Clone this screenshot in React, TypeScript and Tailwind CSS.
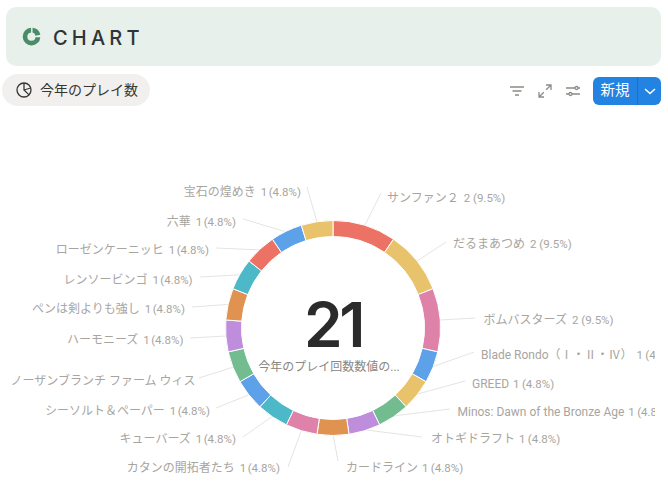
import React from "react";

const CX = 333;
const CY = 328;
const RO = 107.5;
const RI = 91.5;
const FONT = "Roboto, 'Noto Sans CJK JP', sans-serif";
const INTER = "Inter, 'Noto Sans CJK JP', sans-serif";

type L = {
  color: string;
  units: number;
  name: string;
  val: string;
  end: [number, number];
  tx: number;
  ty: number;
  anchor: "start" | "end";
};

const items: L[] = [
  { color: "#EC7266", units: 2, name: "サンファン２", val: "2 (9.5%)", end: [381, 193], tx: 387, ty: 202, anchor: "start" },
  { color: "#E9C26C", units: 2, name: "だるまあつめ", val: "2 (9.5%)", end: [446, 242], tx: 453, ty: 248, anchor: "start" },
  { color: "#DF82A9", units: 2, name: "ボムバスターズ", val: "2 (9.5%)", end: [475, 318], tx: 483.5, ty: 324, anchor: "start" },
  { color: "#5DA1E9", units: 1, name: "Blade Rondo（Ⅰ・Ⅱ・Ⅳ）", val: "1 (4.8%)", end: [474, 352], tx: 481, ty: 359, anchor: "start" },
  { color: "#E9C26C", units: 1, name: "GREED", val: "1 (4.8%)", end: [465, 381], tx: 472, ty: 388, anchor: "start" },
  { color: "#72BC8F", units: 1, name: "Minos: Dawn of the Bronze Age", val: "1 (4.8%)", end: [450, 409], tx: 457.5, ty: 416, anchor: "start" },
  { color: "#BE8DDB", units: 1, name: "オトギドラフト", val: "1 (4.8%)", end: [422, 437], tx: 431, ty: 443, anchor: "start" },
  { color: "#E09251", units: 1, name: "カードライン", val: "1 (4.8%)", end: [338, 461], tx: 346, ty: 472, anchor: "start" },
  { color: "#DF82A9", units: 1, name: "カタンの開拓者たち", val: "1 (4.8%)", end: [288, 467], tx: 280, ty: 472, anchor: "end" },
  { color: "#4DB8C8", units: 1, name: "キューバーズ", val: "1 (4.8%)", end: [243, 437], tx: 236, ty: 443, anchor: "end" },
  { color: "#5DA1E9", units: 1, name: "シーソルト＆ペーパー", val: "1 (4.8%)", end: [216, 408], tx: 210, ty: 415, anchor: "end" },
  { color: "#72BC8F", units: 1, name: "ノーザンブランチ ファーム ウィス", val: "", end: [199, 378], tx: 195.5, ty: 385, anchor: "end" },
  { color: "#BE8DDB", units: 1, name: "ハーモニーズ", val: "1 (4.8%)", end: [190, 338], tx: 183.5, ty: 344, anchor: "end" },
  { color: "#E09251", units: 1, name: "ペンは剣よりも強し", val: "1 (4.8%)", end: [192, 307], tx: 185, ty: 313, anchor: "end" },
  { color: "#4DB8C8", units: 1, name: "レンソービンゴ", val: "1 (4.8%)", end: [200, 277], tx: 192.6, ty: 284, anchor: "end" },
  { color: "#EC7266", units: 1, name: "ローゼンケーニッヒ", val: "1 (4.8%)", end: [216, 248], tx: 209, ty: 254, anchor: "end" },
  { color: "#5DA1E9", units: 1, name: "六華", val: "1 (4.8%)", end: [243, 219], tx: 236, ty: 226, anchor: "end" },
  { color: "#E9C26C", units: 1, name: "宝石の煌めき", val: "1 (4.8%)", end: [307, 187], tx: 301, ty: 196, anchor: "end" },
];

function pt(r: number, a: number): [number, number] {
  const t = (a * Math.PI) / 180;
  return [CX + r * Math.sin(t), CY - r * Math.cos(t)];
}

function arc(a0: number, a1: number) {
  const [x0, y0] = pt(RO, a0);
  const [x1, y1] = pt(RO, a1);
  const [x2, y2] = pt(RI, a1);
  const [x3, y3] = pt(RI, a0);
  const large = a1 - a0 > 180 ? 1 : 0;
  return `M${x0} ${y0}A${RO} ${RO} 0 ${large} 1 ${x1} ${y1}L${x2} ${y2}A${RI} ${RI} 0 ${large} 0 ${x3} ${y3}Z`;
}

function Chart() {
  let u = 0;
  return (
    <svg width="668" height="384" viewBox="0 110 668 384" className="block" style={{ fontFamily: FONT }}>
      <defs>
        <clipPath id="clipr">
          <rect x="0" y="110" width="655" height="384" />
        </clipPath>
      </defs>
      {items.map((it, i) => {
        const mid = ((u + it.units / 2) / 21) * 360;
        const [sx, sy] = pt(RO - 1, mid);
        const d = arc((u / 21) * 360, ((u + it.units) / 21) * 360);
        u += it.units;
        const isDouble = it.units === 2;
        const isRight = it.anchor === "start";
        return (
          <g key={i}>
            <line x1={sx} y1={sy} x2={it.end[0]} y2={it.end[1]} stroke="#e4e4e2" strokeWidth="1" />
            <path d={d} fill={it.color} stroke="#ffffff" strokeWidth="1" />
            <text x={it.tx} y={it.ty} textAnchor={it.anchor} fontSize="12" fill="#a8a59f" clipPath="url(#clipr)">
              {it.name}
              {it.val ? (
                <tspan fontSize="11.5" dx={isRight && !isDouble ? 4 : 5} wordSpacing={isDouble ? 0 : isRight ? -0.5 : -1.5}>
                  {it.val}
                </tspan>
              ) : null}
            </text>
          </g>
        );
      })}
      <text x={CX} y={346.5} textAnchor="middle" fontSize="62" fontWeight="600" letterSpacing="-3.5" fill="#2b2b2b" style={{ fontFamily: INTER }}>21</text>
      <text x={329} y={371} textAnchor="middle" fontSize="12" fill="#8a8781">今年のプレイ回数数値の...</text>
    </svg>
  );
}

export default function App() {
  return (
    <div className="relative w-[668px] h-[494px] overflow-hidden bg-white" style={{ fontFamily: FONT }}>
      <div className="pt-[7px] pl-[6px] pr-[7px]">
        <div className="h-[59px] rounded-[10px] bg-[#e7f0eb] flex items-center pl-[15px]">
          <svg width="21" height="21" viewBox="0 0 20 20">
            <path d="M9.6 1.7A8.4 8.4 0 1 0 18.4 10.6h-4.6A3.9 3.9 0 1 1 9.6 6.2z" fill="#4a8c68" />
            <path d="M11 1.7A8.4 8.4 0 0 1 18.4 8.4L13.8 9.2A3.9 3.9 0 0 0 11 6.3z" fill="#4a8c68" />
          </svg>
          <span className="ml-[11px] mt-[2px] text-[20px] font-medium tracking-[0.21em] text-[#2f3437] leading-none" style={{ fontFamily: INTER }}>CHART</span>
        </div>
      </div>
      <div className="flex items-center justify-between h-[32px] mt-[8px] pl-[2px] pr-[7px]">
        <div className="flex items-center h-[32px] w-[148px] rounded-full bg-[#f1f0ee] pl-[14px]">
          <svg width="16" height="16" viewBox="0 0 16 16" fill="none" stroke="#37352f" strokeWidth="1.3">
            <circle cx="8" cy="8" r="7" />
            <path d="M8 1v7l4.8 4.6M8 8l6.6-2" />
          </svg>
          <span className="ml-[8px] text-[14px] text-[#37352f]">今年のプレイ数</span>
        </div>
        <div className="flex items-center mt-[2px]">
          <svg width="16" height="16" viewBox="0 0 16 16" fill="none" stroke="#8d8b86" strokeWidth="1.3" className="mr-[12px]">
            <path d="M1 4h14M3.5 8h9M6 12h4" />
          </svg>
          <svg width="16" height="16" viewBox="0 0 16 16" fill="none" stroke="#8d8b86" strokeWidth="1.3" className="mr-[12px]">
            <path d="M9 2h5v5M14 2l-4.8 4.8M7 14H2V9M2 14l4.8-4.8" />
          </svg>
          <svg width="16" height="16" viewBox="0 0 16 16" fill="none" stroke="#8d8b86" strokeWidth="1.3" className="mr-[12px]">
            <path d="M1 5h9M13 5h2M1 11h3M7 11h8" />
            <circle cx="11.5" cy="5" r="1.5" />
            <circle cx="5.5" cy="11" r="1.5" />
          </svg>
          <div className="flex items-center h-[28px] w-[68px] rounded-[6px] bg-[#2383e2] text-white">
            <span className="w-[44px] text-center text-[14.5px]">新規</span>
            <span className="w-[1px] h-full bg-[#1b6fc4]" />
            <span className="flex-1 flex justify-center">
              <svg width="14" height="14" viewBox="0 0 14 14" fill="none" stroke="#ffffff" strokeWidth="1.5">
                <path d="M2 5l5 4.5L12 5" />
              </svg>
            </span>
          </div>
        </div>
      </div>
      <div className="mt-[4px]">
        <Chart />
      </div>
    </div>
  );
}
